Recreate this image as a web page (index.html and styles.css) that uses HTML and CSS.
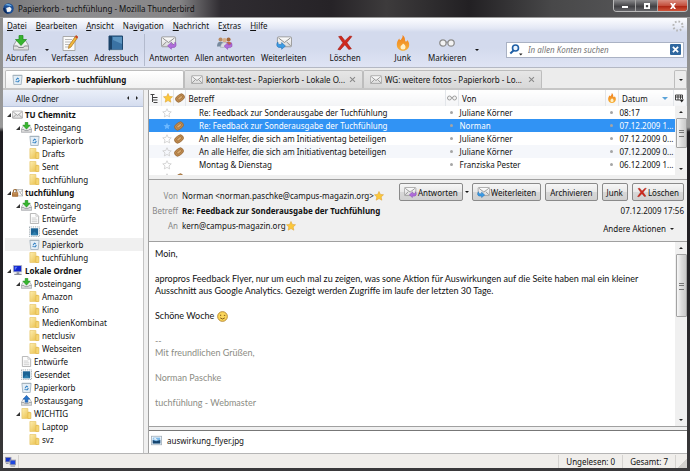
FILE: index.html
```
<!DOCTYPE html>
<html lang="de">
<head>
  <meta charset="UTF-8" />
  <meta name="viewport" content="width=device-width, initial-scale=1.0"/>
  <title>Papierkorb - tuchfühlung - Mozilla Thunderbird</title>
  <link rel="stylesheet" href="styles.css">
</head>
<body>

  <svg class="sprite" aria-hidden="true">
    <defs>
      <linearGradient id="gold" x1="0" y1="0" x2="1" y2="1">
        <stop offset="0" stop-color="#fdeeb0"/><stop offset="1" stop-color="#e9bd45"/>
      </linearGradient>
      <linearGradient id="fire" x1="0" y1="0" x2="0" y2="1">
        <stop offset="0" stop-color="#ef7d1a"/><stop offset="1" stop-color="#f7b23c"/>
      </linearGradient>
      <linearGradient id="paper" x1="0" y1="0" x2="0" y2="1">
        <stop offset="0" stop-color="#ffffff"/><stop offset="1" stop-color="#d6d6d6"/>
      </linearGradient>
    </defs>
    <symbol id="i-mail" viewBox="0 0 16 12">
      <rect x=".5" y="1" width="15" height="10.500" rx="1" fill="url(#paper)" stroke="#9a9a9a"/>
      <path d="M1.5 2l6.500 5.500L14.500 2M1.500 10.500l4.500-4.500M14.500 10.500L10 6" fill="none" stroke="#858585"/>
    </symbol>
    <symbol id="i-lockmail" viewBox="0 0 16 12">
      <rect x="5" y="1.500" width="10.500" height="9.500" fill="#fafafa" stroke="#aaa"/>
      <path d="M8 2l4 4 3.500-4M15 10.500L11.500 6" fill="none" stroke="#999"/>
      <path d="M2 6V4a2.500 2.500 0 0 1 5 0v2" fill="none" stroke="#9a6a35" stroke-width="1.500"/>
      <rect x="0" y="5.500" width="9" height="6.500" rx="1" fill="#a9713a"/>
      <path d="M1 7.500h7M1 9.500h7" stroke="#d3a269"/>
    </symbol>
    <symbol id="i-inbox" viewBox="0 0 16 15">
      <path d="M3.500 5h9l3 5v4.500H.5V10z" fill="url(#paper)" stroke="#9c9fa3"/>
      <path d="M.5 10.500h4l1 1.500h5l1-1.500h4" fill="none" stroke="#85898e"/>
      <path d="M6 0h4v4h3.500L8 10 2.500 4H6z" fill="#37b52e" stroke="#1e8a1c" stroke-width=".7"/>
    </symbol>
    <symbol id="i-outbox" viewBox="0 0 16 15">
      <path d="M3.500 5h9l3 5v4.500H.5V10z" fill="url(#paper)" stroke="#9c9fa3"/>
      <path d="M.5 10.500h4l1 1.500h5l1-1.500h4" fill="none" stroke="#85898e"/>
      <path d="M6 10h4V5.500h3L8 0 3 5.500h3z" fill="#2673c9" stroke="#16509a" stroke-width=".7"/>
    </symbol>
    <symbol id="i-trash" viewBox="0 0 12 12">
      <path d="M1 1.500h10L10 11.500H2z" fill="#e4eef6" stroke="#a3b3c0"/>
      <path d="M1 1.500h10" stroke="#a3b0ba"/>
      <path d="M4.500 6.500L6 4.500l1.500 1M8 6.500L7 8.500H5.500M4 7.500l1 1" fill="none" stroke="#3583c4" stroke-width="1.200"/>
    </symbol>
    <symbol id="i-folder" viewBox="0 0 12 12">
      <path d="M1 .5h6.500v4h2V11.500H1z" fill="url(#gold)" stroke="#e9c86c" stroke-width=".8"/>
      <path d="M7.500 5h3.300v6.500H7.500z" fill="#f5d777" stroke="#e0b548" stroke-width=".7"/>
    </symbol>
    <symbol id="i-page" viewBox="0 0 12 12">
      <path d="M1.500.5h6l3 3v8h-9z" fill="#fdfdfd" stroke="#b0b0b0"/>
      <path d="M7.500.5v3h3M3 5.500h5M3 7.500h6M3 9.500h6" fill="none" stroke="#c9c9c9"/>
    </symbol>
    <symbol id="i-sent" viewBox="0 0 12 12">
      <rect x=".5" y="1" width="11" height="10.500" fill="#fff" stroke="#8f9ba3" stroke-dasharray="1 1"/>
      <rect x="2" y="2.500" width="8" height="7.500" fill="#1c6394"/>
      <path d="M2 10l4-4 4 4z" fill="#2d7fae"/>
    </symbol>
    <symbol id="i-computer" viewBox="0 0 12 12">
      <rect x="1" y="0" width="10" height="8" fill="#b8bcc8"/>
      <rect x="2" y="1" width="8" height="6" fill="#1226cf"/>
      <path d="M3 2l3 0-3 4z" fill="#5f7bf5"/>
      <path d="M5 8h3v1.500h2.500V11h-8V9.500H5z" fill="#8b8f9c"/>
    </symbol>
    <symbol id="i-network" viewBox="0 0 12 12">
      <rect x="0" y="1" width="7" height="6" fill="#99a"/><rect x="1" y="2" width="5" height="4" fill="#1433c8"/>
      <rect x="5" y="4" width="7" height="6" fill="#99a"/><rect x="6" y="5" width="5" height="4" fill="#1f48e0"/>
      <path d="M1 8h3M6 11h5" stroke="#7c8090"/>
    </symbol>
    <symbol id="i-compose" viewBox="0 0 16 16">
      <path d="M1 1.500h12v14H1z" fill="#fbfbfb" stroke="#a9a9a9"/>
      <path d="M3 4.500h7M3 7h6M3 9.500h5M3 12h4" stroke="#b9b9b9"/>
      <path d="M14 .5l2 1.500-7 10-2.500 1.500.5-3z" fill="#f2b93c" stroke="#a8701c" stroke-width=".7"/>
      <path d="M14 .5l2 1.500-1 1.500-2-1.500z" fill="#cc3a2c"/>
    </symbol>
    <symbol id="i-book" viewBox="0 0 16 16">
      <path d="M1 1h13.500v14H1z" fill="#3a72a3" stroke="#1d466d"/>
      <path d="M1 1h3v14H1z" fill="#1b4369"/>
      <path d="M5 2h9v7L5 5z" fill="#5b94c0"/>
      <path d="M2 15.300h13" stroke="#d9e2ea"/>
    </symbol>
    <symbol id="i-reply" viewBox="0 0 17 14">
      <rect x=".5" y=".5" width="15" height="10.500" rx="1" fill="url(#paper)" stroke="#9a9a9a"/>
      <path d="M1.500 1.500L8 6.500l6.500-5M1.500 10l4-4M14.500 10l-4-4" fill="none" stroke="#858585"/>
      <path d="M7 10l4-3.500v2h2.500c1 0 1.500-1 1.300-2.500 1.800 2 1.500 5.500-1.300 5.700H11v2z" fill="#b06ddb" stroke="#8b45bd" stroke-width=".6"/>
    </symbol>
    <symbol id="i-forward" viewBox="0 0 17 14">
      <rect x="1.500" y=".5" width="15" height="10.500" rx="1" fill="url(#paper)" stroke="#9a9a9a"/>
      <path d="M2.500 1.500L9 6.500l6.500-5M15.500 10l-4-4" fill="none" stroke="#858585"/>
      <path d="M10 10.200L6 6.500v2H3.500C2.500 8.500 2 7.500 2 6 .2 8 .5 11.500 3.500 11.700H6v2z" fill="#3a9be6" stroke="#1d6cb4" stroke-width=".6"/>
    </symbol>
    <symbol id="i-replyall" viewBox="0 0 18 14">
      <circle cx="4" cy="3" r="2.300" fill="#b98a60"/><path d="M0 11c0-4 1.500-5.500 4-5.500S8 7 8 11z" fill="#76899e"/>
      <circle cx="13" cy="3" r="2.300" fill="#a3683c"/><path d="M9 11c0-4 1.500-5.500 4-5.500s4 1.500 4 5.500z" fill="#c1674b"/>
      <circle cx="8.500" cy="4" r="2.500" fill="#d8b08a"/><path d="M4 12c0-4 2-5.500 4.500-5.500S13 8 13 12z" fill="#d9dde3" stroke="#8e97a3" stroke-width=".5"/>
      <path d="M8 10.500l4-3.500v2h2.500c1 0 1.500-1 1.300-2.500 1.800 2 1.500 5.500-1.300 5.700H12v2z" fill="#b06ddb" stroke="#8b45bd" stroke-width=".6"/>
    </symbol>
    <symbol id="i-delete" viewBox="0 0 15 14">
      <path d="M1.500 1L4 .5l3.500 4.300L12 .5l2 .3-4.700 6L13.500 12.500l-2.500.5-3.600-4.300L3 13.500.8 13l4.700-6.300z" fill="#cf2a1e" stroke="#9c150d" stroke-width=".5"/>
    </symbol>
    <symbol id="i-junk" viewBox="0 0 13 16">
      <path d="M6 0c.5 2-.5 3-1.500 4.500C4 5.500 3 5 2.800 3.500 1 5.500.3 7.500.3 9.800c0 3.500 2.700 6 6.200 6s6.200-2.500 6.200-6c0-2-.9-3.800-2-4.800 0 1-.6 1.600-1.500 1.500C8 6.300 9.500 2.500 6 0z" fill="url(#fire)"/>
      <path d="M6.500 8.500c1.500 1 2.500 2 2.500 3.500a2.500 2.500 0 0 1-5 0c0-1.500 2-2 2.500-3.500z" fill="#fff1c8"/>
    </symbol>
    <symbol id="i-mark" viewBox="0 0 15 8">
      <circle cx="3.700" cy="4" r="3" fill="#f3f3f3" stroke="#8c8c8c" stroke-width="1.200"/>
      <circle cx="11.300" cy="4" r="3" fill="#f3f3f3" stroke="#8c8c8c" stroke-width="1.200"/>
      <path d="M6.500 3.500q1-1 2 0" fill="none" stroke="#8c8c8c"/>
    </symbol>
    <symbol id="i-star" viewBox="0 0 12 12">
      <path d="M6 .6l1.600 3.500 3.800.4-2.800 2.600.8 3.900L6 9.100 2.600 11l.8-3.900L.6 4.500l3.800-.4z" fill="#fbc83b" stroke="#e0a435" stroke-width=".7"/>
    </symbol>
    <symbol id="i-star-off" viewBox="0 0 12 12">
      <path d="M6 .9l1.500 3.300 3.600.4-2.700 2.500.8 3.600L6 8.900l-3.200 1.800.8-3.600L.9 4.600l3.600-.4z" fill="none" stroke="#c9c9c9" stroke-width=".9"/>
    </symbol>
    <symbol id="i-star-sel" viewBox="0 0 12 12">
      <path d="M6 2l1.200 2.700 3 .3L8 7l.6 3L6 8.500 3.400 10 4 7 1.800 5l3-.3z" fill="#6cb8ff"/>
    </symbol>
    <symbol id="i-clip" viewBox="0 0 12 12">
      <g transform="rotate(-38 6 6)">
        <rect x=".3" y="2.300" width="11.400" height="7.400" rx="3.700" fill="#c18c50" stroke="#8f6230" stroke-width=".8"/>
        <rect x="3" y="4.600" width="6.500" height="2.800" rx="1.400" fill="#dcae74" stroke="#8f6230" stroke-width=".7"/>
      </g>
    </symbol>
    <symbol id="i-thread" viewBox="0 0 8 9">
      <path d="M0 .5h4M2 1v7M2 3.500h5M2 6h5M3 8.500h4" fill="none" stroke="#444"/>
    </symbol>
    <symbol id="i-picker" viewBox="0 0 9 8">
      <path d="M.5.500h7v4M.5.500v5H5M.5 2.500h7M3 .5v5M5.500.500v4" fill="none" stroke="#333" stroke-width=".9"/>
      <path d="M4.500 5h4.500L6.700 8z" fill="#222"/>
    </symbol>
    <symbol id="i-image" viewBox="0 0 13 11">
      <rect x=".5" y=".5" width="12" height="10" fill="#fff" stroke="#a3b1bd"/>
      <rect x="2" y="2" width="9" height="7" fill="#7db9e8"/>
      <path d="M2 5l4 1.500L11 5v4H2z" fill="#15446e"/><path d="M2 4l3-1.500L8 5z" fill="#fff"/>
    </symbol>
    <symbol id="i-smile" viewBox="0 0 12 12">
      <circle cx="6" cy="6" r="5.300" fill="#fbd65b" stroke="#b5842c"/>
      <path d="M4 4v1.500M7.500 4.800H9M3.500 7.500Q6 10 8.500 7.500" fill="none" stroke="#7d5312"/>
    </symbol>
    <symbol id="i-bird" viewBox="0 0 12 12">
      <circle cx="6" cy="6" r="5.700" fill="#1c4f96"/>
      <path d="M2 2.500Q6-.5 10 3.500L7 3Q4 2 2 2.500z" fill="#6fb1e8"/>
      <path d="M3.500 5.500l4-1.500 2 2.500-1.500 3-3.500.3z" fill="#f4f4f4"/>
      <path d="M0 6q1 6 7 5.700Q3 11 2 5z" fill="#0c2a5c"/>
    </symbol>
    <symbol id="i-search" viewBox="0 0 13 12">
      <circle cx="6" cy="4" r="3" fill="#eaf4ff" stroke="#1f5fa6" stroke-width="1.600"/>
      <path d="M4 6.500L.8 9.500" stroke="#1f5fa6" stroke-width="2"/>
      <path d="M9.500 9.500h3.500l-1.700 2z" fill="#222"/>
    </symbol>
    <symbol id="i-throbber" viewBox="0 0 12 12">
      <circle cx="6" cy="6" r="4.600" fill="none" stroke="#b4b4b4" stroke-width="2" stroke-dasharray="1.600 2"/>
    </symbol>
  </svg>

  <div class="window">
    <header class="titlebar">
      <svg class="icon-11"><use href="#i-bird"/></svg>
      <span class="title">Papierkorb - tuchfühlung - Mozilla Thunderbird</span>
      <div class="window-buttons">
        <button aria-label="Minimieren"><svg viewBox="0 0 10 8"><path d="M1 4h8v2.500H1z"/></svg></button>
        <button aria-label="Maximieren"><svg viewBox="0 0 10 8"><path d="M1 0h8v8H1zM3.500 2.500v3h3v-3z" fill-rule="evenodd"/></svg></button>
        <button class="close" aria-label="Schließen"><svg viewBox="0 0 10 8"><path d="M1 0h2.500L5 2 6.500 0H9L6.500 4 9 8H6.500L5 6 3.500 8H1l2.500-4z"/></svg></button>
      </div>
    </header>

    <div class="client">
      <div class="chrome">
        <nav class="menubar">
          <button><u>D</u>atei</button>
          <button><u>B</u>earbeiten</button>
          <button><u>A</u>nsicht</button>
          <button>Na<u>v</u>igation</button>
          <button><u>N</u>achricht</button>
          <button>E<u>x</u>tras</button>
          <button><u>H</u>ilfe</button>
          <svg class="throbber"><use href="#i-throbber"/></svg>
        </nav>

        <div class="toolbar">
          <button class="tool"><svg><use href="#i-inbox"/></svg>Abrufen</button>
          <button class="drop" aria-label="Konten"></button>
          <button class="tool"><svg><use href="#i-compose"/></svg>Verfassen</button>
          <button class="tool"><svg><use href="#i-book"/></svg>Adressbuch</button>
          <span class="divider"></span>
          <button class="tool"><svg><use href="#i-reply"/></svg>Antworten</button>
          <button class="tool"><svg><use href="#i-replyall"/></svg>Allen antworten</button>
          <button class="tool"><svg><use href="#i-forward"/></svg>Weiterleiten</button>
          <button class="tool wide"><svg><use href="#i-delete"/></svg>Löschen</button>
          <button class="tool wide"><svg><use href="#i-junk"/></svg>Junk</button>
          <button class="tool"><svg class="small"><use href="#i-mark"/></svg>Markieren</button>
          <button class="drop" aria-label="Markierungen"></button>
          <div class="search">
            <svg class="search-icon"><use href="#i-search"/></svg>
            <input type="text" aria-label="Suchen" placeholder="In allen Konten suchen">
            <button aria-label="Suche leeren"><svg viewBox="0 0 8 8"><path d="M1 1l6 6M7 1L1 7" stroke="#fff" stroke-width="2"/></svg></button>
          </div>
        </div>
      </div>

      <div class="tabs">
        <button class="tab active"><svg class="icon-11"><use href="#i-trash"/></svg>Papierkorb - tuchfühlung</button>
        <button class="tab"><svg class="icon-mail"><use href="#i-mail"/></svg>kontakt-test - Papierkorb - Lokale O...<span class="x"></span></button>
        <button class="tab"><svg class="icon-mail"><use href="#i-mail"/></svg>WG: weitere fotos - Papierkorb - Lo...<span class="x"></span></button>
        <button class="tab all" aria-label="Alle Tabs"></button>
      </div>

      <div class="panes">
        <aside class="folders">
          <div class="folders-head">Alle Ordner<span class="arrows"><i class="left"></i><i class="right"></i></span></div>
          <ul class="tree">
            <li class="account"><i class="twisty"></i><svg><use href="#i-mail"/></svg>TU Chemnitz</li>
            <li class="l1"><i class="twisty"></i><svg><use href="#i-inbox"/></svg>Posteingang</li>
            <li class="l2"><svg><use href="#i-trash"/></svg>Papierkorb</li>
            <li class="l2"><svg><use href="#i-folder"/></svg>Drafts</li>
            <li class="l2"><svg><use href="#i-folder"/></svg>Sent</li>
            <li class="l2"><svg><use href="#i-folder"/></svg>tuchfühlung</li>
            <li class="account"><i class="twisty"></i><svg><use href="#i-lockmail"/></svg>tuchfühlung</li>
            <li class="l1"><i class="twisty"></i><svg><use href="#i-inbox"/></svg>Posteingang</li>
            <li class="l2"><svg><use href="#i-page"/></svg>Entwürfe</li>
            <li class="l2"><svg><use href="#i-sent"/></svg>Gesendet</li>
            <li class="l2 current"><svg><use href="#i-trash"/></svg>Papierkorb</li>
            <li class="l2"><svg><use href="#i-folder"/></svg>tuchfühlung</li>
            <li class="account"><i class="twisty"></i><svg><use href="#i-computer"/></svg>Lokale Ordner</li>
            <li class="l1"><i class="twisty"></i><svg><use href="#i-inbox"/></svg>Posteingang</li>
            <li class="l2"><svg><use href="#i-folder"/></svg>Amazon</li>
            <li class="l2"><svg><use href="#i-folder"/></svg>Kino</li>
            <li class="l2"><svg><use href="#i-folder"/></svg>MedienKombinat</li>
            <li class="l2"><svg><use href="#i-folder"/></svg>netclusiv</li>
            <li class="l2"><svg><use href="#i-folder"/></svg>Webseiten</li>
            <li class="l1 leaf"><svg><use href="#i-page"/></svg>Entwürfe</li>
            <li class="l1 leaf"><svg><use href="#i-sent"/></svg>Gesendet</li>
            <li class="l1 leaf"><svg><use href="#i-trash"/></svg>Papierkorb</li>
            <li class="l1 leaf"><svg><use href="#i-outbox"/></svg>Postausgang</li>
            <li class="l1"><i class="twisty"></i><svg><use href="#i-folder"/></svg>WICHTIG</li>
            <li class="l2"><svg><use href="#i-folder"/></svg>Laptop</li>
            <li class="l2"><svg><use href="#i-folder"/></svg>svz</li>
          </ul>
        </aside>

        <main class="mail">
          <div class="list">
            <table class="threads">
              <colgroup>
                <col class="c-icon"><col class="c-icon"><col class="c-icon"><col><col class="c-dot"><col class="c-from"><col class="c-dot"><col class="c-date"><col class="c-pick">
              </colgroup>
              <thead>
                <tr>
                  <th><svg class="icon-9"><use href="#i-thread"/></svg></th>
                  <th><svg class="icon-10"><use href="#i-star"/></svg></th>
                  <th><svg class="icon-10"><use href="#i-clip"/></svg></th>
                  <th class="t">Betreff</th>
                  <th><svg class="icon-10"><use href="#i-mark"/></svg></th>
                  <th class="t">Von</th>
                  <th><svg class="icon-10"><use href="#i-junk"/></svg></th>
                  <th class="t sorted">Datum</th>
                  <th><svg class="icon-9"><use href="#i-picker"/></svg></th>
                </tr>
              </thead>
              <tbody>
                <tr><td></td><td><svg class="icon-10"><use href="#i-star-off"/></svg></td><td></td><td class="subject">Re: Feedback zur Sonderausgabe der Tuchfühlung</td><td><i class="dot"></i></td><td>Juliane Körner</td><td><i class="dot"></i></td><td>08:17</td><td></td></tr>
                <tr class="selected"><td></td><td><svg class="icon-10"><use href="#i-star-sel"/></svg></td><td><svg class="icon-10"><use href="#i-clip"/></svg></td><td class="subject">Re: Feedback zur Sonderausgabe der Tuchfühlung</td><td><i class="dot"></i></td><td>Norman</td><td><i class="dot"></i></td><td>07.12.2009 1...</td><td></td></tr>
                <tr><td></td><td><svg class="icon-10"><use href="#i-star-off"/></svg></td><td><svg class="icon-10"><use href="#i-clip"/></svg></td><td class="subject">An alle Helfer, die sich am Initiativentag beteiligen</td><td><i class="dot"></i></td><td>Juliane Körner</td><td><i class="dot"></i></td><td>07.12.2009 0...</td><td></td></tr>
                <tr class="odd"><td></td><td><svg class="icon-10"><use href="#i-star-off"/></svg></td><td><svg class="icon-10"><use href="#i-clip"/></svg></td><td class="subject">An alle Helfer, die sich am Initiativentag beteiligen</td><td><i class="dot"></i></td><td>Juliane Körner</td><td><i class="dot"></i></td><td>07.12.2009 0...</td><td></td></tr>
                <tr><td></td><td><svg class="icon-10"><use href="#i-star-off"/></svg></td><td></td><td class="subject">Montag &amp; Dienstag</td><td><i class="dot"></i></td><td>Franziska Pester</td><td><i class="dot"></i></td><td>06.12.2009 1...</td><td></td></tr>
                <tr><td></td><td><svg class="icon-10"><use href="#i-star-off"/></svg></td><td><svg class="icon-10"><use href="#i-clip"/></svg></td><td></td><td></td><td></td><td></td><td></td><td></td></tr>
              </tbody>
            </table>
            <div class="scrollbar list-scroll"><i class="up"></i><span class="thumb"></span><i class="down"></i></div>
          </div>

          <section class="message-head">
            <dl class="fields">
              <dt>Von</dt><dd>Norman &lt;norman.paschke@campus-magazin.org&gt;<svg class="icon-10"><use href="#i-star"/></svg></dd>
              <dt>Betreff</dt><dd class="bold">Re: Feedback zur Sonderausgabe der Tuchfühlung</dd>
              <dt>An</dt><dd>kern@campus-magazin.org<svg class="icon-10"><use href="#i-star"/></svg></dd>
            </dl>
            <div class="head-right">
              <div class="actions">
                <button><svg><use href="#i-reply"/></svg>Antworten</button>
                <button class="drop" aria-label="Antwortoptionen"></button>
                <button><svg><use href="#i-forward"/></svg>Weiterleiten</button>
                <button>Archivieren</button>
                <button>Junk</button>
                <button><svg class="del"><use href="#i-delete"/></svg>Löschen</button>
              </div>
              <time>07.12.2009 17:56</time>
              <button class="more">Andere Aktionen<i></i></button>
            </div>
          </section>

          <section class="message">
            <div class="message-text">
              <p>Moin,</p>
              <p>apropros Feedback Flyer, nur um euch mal zu zeigen, was sone Aktion für Auswirkungen auf die Seite haben mal ein kleiner<br>Ausschnitt aus Google Analytics. Gezeigt werden Zugriffe im laufe der letzten 30 Tage.</p>
              <p>Schöne Woche <svg class="smile"><use href="#i-smile"/></svg></p>
              <div class="signature">
                <p>--<br>Mit freundlichen Grüßen,</p>
                <p>Norman Paschke</p>
                <p>tuchfühlung - Webmaster</p>
              </div>
            </div>
            <div class="scrollbar"><i class="up"></i><span class="thumb tall"></span><i class="down"></i></div>
          </section>

          <div class="attachments"><svg class="icon-11"><use href="#i-image"/></svg>auswirkung_flyer.jpg</div>
        </main>
      </div>

      <footer class="status">
        <span class="online"><svg class="icon-11"><use href="#i-network"/></svg></span>
        <span class="cell first">Ungelesen: 0</span>
        <span class="cell">Gesamt: 7</span>
        <span class="grip"></span>
      </footer>
    </div>
  </div>

</body>
</html>
```
FILE: styles.css
```
* {
  box-sizing: border-box;
}

body {
  margin: 0;
  font-family: "Noto Sans", "Open Sans", sans-serif;
  font-size: 8px;
  line-height: 13px;
  color: #111;
}

button {
  border: 0;
  padding: 0;
  margin: 0;
  background: none;
  color: inherit;
  font: inherit;
  white-space: nowrap;
}

svg {
  display: block;
  flex: none;
}

.sprite {
  position: absolute;
  width: 0;
  height: 0;
}

.icon-9 {
  width: 9px;
  height: 9px;
}

.icon-10 {
  width: 10px;
  height: 10px;
}

.icon-11 {
  width: 11px;
  height: 11px;
}

.icon-mail {
  width: 12px;
  height: 9px;
}

/* window frame */
.window {
  display: flex;
  flex-direction: column;
  height: 100vh;
  padding: 0 3px 3px;
  background: linear-gradient(#8a8a8a, #9a9a9a 27%, #1d1b1f 28%, #232225 60%, #3a393b);
}

.titlebar {
  display: flex;
  align-items: center;
  height: 18px;
  margin: 0 -3px;
  padding-left: 3px;
  border-bottom: 1px solid #9b9b9b;
  background: linear-gradient(90deg, #77777a, #8e8e90 10%, #868587 26%, #2f2c31 32%, #262327 48%, #3d3b3c 56%, #222023 68%, #484849 80%, #5e5e60);
}

.title {
  flex: 1;
  padding-left: 4px;
}

.window-buttons {
  display: flex;
  align-self: flex-start;
  margin-right: 2px;
  border: 1px solid #b9b9b9;
  border-top: 0;
  border-radius: 0 0 4px 4px;
  overflow: hidden;
}

.window-buttons button {
  display: flex;
  align-items: center;
  justify-content: center;
  width: 22px;
  height: 11px;
  border-right: 1px solid #a5a5a5;
  background: linear-gradient(#8b8b8d, #4b4b4e 50%, #3a3a3d 51%, #66666a);
}

.window-buttons .close {
  width: 29px;
  border-right: 0;
  background: linear-gradient(#d98d80, #c4503e 50%, #a8200f 51%, #d0553a);
}

.window-buttons svg {
  width: 8px;
  height: 6px;
  fill: #fff;
}

.client {
  display: flex;
  flex-direction: column;
  flex: 1;
  min-height: 0;
  background: #f0f0f0;
}

/* menu and toolbar */
.chrome {
  border-bottom: 1px solid #b4b8c4;
  background: linear-gradient(#fcfdff, #e4e8f5 10px, #d3daed 14px, #d3daed 30px, #dfe4f4);
}

.menubar {
  display: flex;
  align-items: center;
  gap: 9px;
  height: 15px;
  padding: 0 3px 0 4px;
}

.throbber {
  width: 12px;
  height: 12px;
  margin-left: auto;
}

.toolbar {
  display: flex;
  align-items: center;
  height: 34px;
  padding: 0 3px 1px;
}

.tool {
  display: flex;
  flex-direction: column;
  align-items: center;
  margin-right: 6px;
}

.tool svg {
  width: 16px;
  height: 16px;
}

.tool svg.small {
  padding: 2px 0;
}

.tool.wide {
  margin: 0 17px;
}

.drop {
  width: 9px;
  height: 16px;
}

.drop::before {
  content: "";
  display: block;
  width: 0;
  margin: 0 auto;
  border: 2px solid transparent;
  border-top-color: #111;
  border-bottom: 0;
}

.divider {
  width: 1px;
  height: 32px;
  margin-right: 4px;
  background: #b3bacd;
}

.search {
  display: flex;
  align-items: center;
  width: 178px;
  height: 16px;
  margin-left: auto;
  padding: 1px 2px;
  border: 1px solid #aab2c4;
  background: #fff;
}

.search-icon {
  width: 14px;
  height: 12px;
}

.search input {
  flex: 1;
  min-width: 0;
  padding: 0 5px;
  border: 0;
  outline: 0;
  background: none;
  font: inherit;
  font-style: italic;
}

.search input::placeholder {
  color: #777;
}

.search button {
  width: 11px;
  height: 11px;
  padding: 2px;
  border-radius: 1px;
  background: #2f679f;
}

/* tabs */
.tabs {
  display: flex;
  height: 22px;
  padding: 2px 0 0 2px;
  border-bottom: 2px solid #c6c6c6;
  background: #ececec;
}

.tab {
  display: flex;
  align-items: center;
  gap: 3px;
  width: 179px;
  padding: 0 6px;
  border: 1px solid #bdbdbd;
  border-bottom: 0;
  border-radius: 2px 2px 0 0;
  background: linear-gradient(#e6e6e6, #d8d8d8);
}

.tab.active {
  background: linear-gradient(#fff, #f1f1f1);
  font-weight: bold;
}

.tab .x {
  position: relative;
  width: 7px;
  height: 7px;
  margin-left: auto;
}

.x::before,
.x::after {
  content: "";
  position: absolute;
  top: 3px;
  left: 0;
  width: 7px;
  height: 1px;
  background: #888;
  transform: rotate(45deg);
}

.x::after {
  transform: rotate(-45deg);
}

.tab.all {
  justify-content: center;
  width: 13px;
  margin-left: auto;
  padding: 0;
  background: #ececec;
}

.tab.all::before {
  content: "";
  border: 2px solid transparent;
  border-top-color: #222;
  border-bottom: 0;
}

/* folder pane */
.panes {
  display: flex;
  flex: 1;
  min-height: 0;
}

.folders {
  width: 141px;
  border-right: 1px solid #c4c4c4;
  background: #fff;
}

.folders-head {
  display: flex;
  align-items: center;
  justify-content: space-between;
  height: 17px;
  padding: 0 5px 0 13px;
  border-bottom: 1px solid #b7c3dc;
  background: linear-gradient(#eaeff9, #d5ddef);
}

.arrows {
  display: flex;
  gap: 7px;
}

.arrows i {
  border: 2px solid transparent;
}

.arrows .left {
  border-right-color: #222;
  border-left: 0;
}

.arrows .right {
  border-left-color: #222;
  border-right: 0;
}

.tree {
  margin: 0;
  padding: 1px 0 0;
  list-style: none;
}

.tree li {
  display: flex;
  align-items: center;
  height: 13px;
  margin-left: 2px;
}

.tree svg {
  width: 11px;
  height: 11px;
  margin-right: 2px;
}

.tree .account {
  padding-left: 2px;
  font-weight: bold;
}

.tree .l1 {
  padding-left: 11px;
}

.tree .l1.leaf {
  padding-left: 16px;
}

.tree .l2 {
  padding-left: 24px;
}

.tree .current {
  background: #f0f0f0;
}

.twisty {
  margin-right: 1px;
  border: 2px solid #333;
  border-top-color: transparent;
  border-left-color: transparent;
}

/* thread list */
.mail {
  display: flex;
  flex-direction: column;
  flex: 1;
  min-width: 0;
  margin-left: 4px;
  border-left: 1px solid #a0a0a0;
}

.list {
  position: relative;
  height: 85px;
  overflow: hidden;
  background: #fff;
}

.threads {
  width: 100%;
  table-layout: fixed;
  border-collapse: collapse;
}

.c-icon {
  width: 12px;
}

.c-dot {
  width: 13px;
}

.c-from {
  width: 147px;
}

.c-date {
  width: 55px;
}

.c-pick {
  width: 13px;
}

.threads th {
  height: 16px;
  padding: 0 1px;
  border-right: 1px solid #e3e6ea;
  background: linear-gradient(#fff, #f3f4f6);
  font-weight: normal;
  text-align: left;
}

.threads .t {
  padding-left: 3px;
}

.threads td {
  height: 13px;
  padding: 0 1px;
  white-space: nowrap;
}

.threads .subject {
  padding-left: 14px;
}

.threads .odd {
  background: #f5f7fb;
}

.threads .selected {
  background: #3193f4;
  color: #fff;
}

.sorted::after {
  content: "";
  float: right;
  margin: 5px 4px;
  border: 3px solid transparent;
  border-top-color: #5aa3d9;
  border-bottom: 0;
}

.dot {
  display: block;
  width: 3px;
  height: 3px;
  margin-left: 3px;
  border-radius: 50%;
  background: #a5a5a5;
}

.scrollbar {
  display: flex;
  flex-direction: column;
  align-items: center;
  width: 12px;
  padding: 5px 0;
  background: #f0f0f0;
}

.list-scroll {
  position: absolute;
  top: 16px;
  right: 0;
  bottom: 0;
}

.scrollbar .up,
.scrollbar .down {
  border: 2px solid transparent;
}

.scrollbar .up {
  border-bottom-color: #222;
  border-top: 0;
}

.scrollbar .down {
  margin-top: auto;
  border-top-color: #222;
  border-bottom: 0;
}

.thumb {
  width: 11px;
  height: 30px;
  margin-top: 5px;
  padding: 11px 2px;
  border: 1px solid #a3a3a3;
  border-radius: 1px;
  background: linear-gradient(90deg, #f7f7f7, #dcdcdc 50%, #c9c9c9);
}

.thumb::before {
  content: "";
  display: block;
  height: 5px;
  border: 1px solid #777;
  border-width: 1px 0;
  background: linear-gradient(transparent 1px, #777 1px, #777 2px, transparent 2px);
}

.thumb.tall {
  height: 63px;
  padding-top: 28px;
}

/* message header */
.message-head {
  display: flex;
  justify-content: space-between;
  height: 63px;
  margin-top: 4px;
  border-top: 1px solid #a0a0a0;
  border-bottom: 1px solid #a0a0a0;
}

.fields {
  display: grid;
  grid-template-columns: 29px 1fr;
  grid-auto-rows: 15px;
  column-gap: 4px;
  align-items: center;
  align-content: start;
  margin: 8px 0 0;
  white-space: nowrap;
}

.fields dt {
  color: #888;
  text-align: right;
}

.fields dd {
  display: flex;
  align-items: center;
  margin: 0;
}

.bold {
  font-weight: bold;
}

.head-right {
  display: flex;
  flex-direction: column;
  align-items: flex-end;
  gap: 3px;
  padding: 3px 3px 0 0;
}

.actions {
  display: flex;
  align-items: center;
  gap: 4px;
}

.actions button {
  display: flex;
  align-items: center;
  gap: 1px;
  height: 18px;
  padding: 0 4px;
  border: 1px solid #8a8a8a;
  border-radius: 2px;
  background: linear-gradient(#f6f6f6, #e8e8e8 50%, #d8d8d8 51%, #d0d0d0);
}

.actions .drop {
  margin: 0 -4px;
  padding: 0;
  border: 0;
  background: none;
}

.actions svg {
  width: 13px;
  height: 11px;
}

.actions .del {
  width: 10px;
}

.head-right time {
  margin-bottom: 2px;
}

.more {
  display: flex;
  align-items: center;
  gap: 4px;
  padding-right: 10px;
}

.more i {
  border: 2px solid transparent;
  border-top-color: #222;
  border-bottom: 0;
}

/* message */
.message {
  display: flex;
  flex: 1;
  min-height: 0;
  border-bottom: 1px solid #a0a0a0;
  background: #fff;
}

.message-text {
  flex: 1;
  padding: 6px;
  font-family: Lato, sans-serif;
  font-size: 9px;
  line-height: 12px;
}

.message-text p {
  margin: 0 0 13px;
}

.smile {
  display: inline-block;
  width: 11px;
  height: 11px;
  vertical-align: middle;
}

.signature {
  color: #8c8c84;
}

.attachments {
  display: flex;
  align-items: center;
  gap: 5px;
  height: 23px;
  margin-top: 3px;
  padding: 0 2px 4px;
  border-top: 1px solid #777;
  background: #fff;
}

/* status bar */
.status {
  display: flex;
  align-items: center;
  height: 15px;
  border-top: 1px solid #b5b5b5;
  background: #f0eeeb;
}

.online {
  padding: 1px 2px;
  border-right: 1px solid #d5d3d0;
}

.cell {
  padding: 0 7px;
  border-left: 1px solid #d5d3d0;
}

.cell.first {
  margin-left: auto;
}

.grip {
  width: 12px;
  height: 13px;
  border-left: 1px solid #d5d3d0;
  background: linear-gradient(135deg, transparent 60%, #d3d1ce 61%);
}
```
